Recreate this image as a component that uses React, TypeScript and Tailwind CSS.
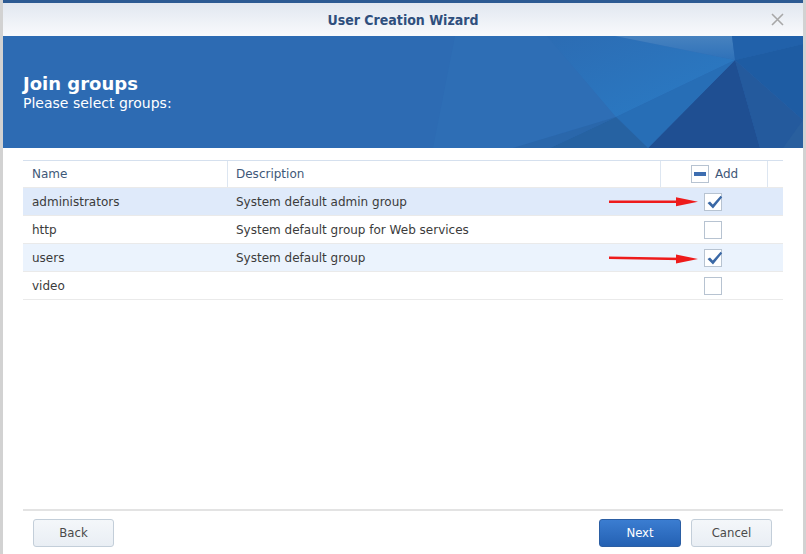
import React from "react";

const rows = [
  { name: "administrators", desc: "System default admin group", checked: true, bg: "bg-[#dfeafa]", arrow: true },
  { name: "http", desc: "System default group for Web services", checked: false, bg: "bg-white", arrow: false },
  { name: "users", desc: "System default group", checked: true, bg: "bg-[#ebf3fd]", arrow: true },
  { name: "video", desc: "", checked: false, bg: "bg-white", arrow: false },
];

function Check() {
  return (
    <svg width="20" height="20" viewBox="0 0 20 20" className="absolute left-[-1px] top-[-2px]">
      <path d="M3.5 11 L6 9.6 L8.8 12.6 L16.6 3.8 L18.2 5.2 L9 16.6 Z" fill="#3a68a6" />
    </svg>
  );
}

function Checkbox({ checked }: { checked: boolean }) {
  return (
    <div className="relative w-[18px] h-[18px] border border-[#b7c3d1] bg-white">
      {checked && <Check />}
    </div>
  );
}

function Arrow({ y2 }: { y2: number }) {
  return (
    <svg width="92" height="14" viewBox="0 0 92 14" className="absolute left-[-96px] top-[2px]">
      <path d={`M1 5.6 L74 ${y2 - 1.3} L74 ${y2 + 1.3} L1 8 Z`} fill="#ee1b1b" />
      <path d={`M68 ${y2 - 4.5} L90 ${y2} L68 ${y2 + 4.5} Z`} fill="#ee1b1b" />
    </svg>
  );
}

function Banner() {
  return (
    <div className="relative h-[112px] bg-[#2d6bb3] overflow-hidden">
      <svg className="absolute inset-0" width="800" height="112" viewBox="0 0 800 112">
        <defs>
          <linearGradient id="lt" x1="0" y1="0" x2="0" y2="1">
            <stop offset="0" stopColor="#4782bf" />
            <stop offset="1" stopColor="#2e71b9" />
          </linearGradient>
          <linearGradient id="br" x1="0" y1="0" x2="1" y2="1">
            <stop offset="0" stopColor="#2c6cb3" />
            <stop offset="1" stopColor="#2a7cc6" />
          </linearGradient>
        </defs>
        <polygon points="452,0 544,0 613,81 510,112 430,112" fill="#2e6eb5" />
        <polygon points="544,0 612,0 732,24 613,81" fill="url(#br)" />
        <polygon points="612,0 729,0 732,24" fill="url(#lt)" />
        <polygon points="729,0 800,0 800,8 732,24" fill="#2161aa" />
        <polygon points="732,24 800,8 800,84" fill="#1e5ca3" />
        <polygon points="732,24 800,84 800,112 757,112" fill="#245a9d" />
        <polygon points="732,24 757,112 645,112" fill="#1f4f92" />
        <polygon points="613,81 732,24 645,112" fill="#276eb6" />
        <polygon points="613,81 645,112 547,112" fill="#2662a2" />
        <polygon points="510,112 547,112 613,81" fill="#2a67ab" />
        <polygon points="800,84 800,112 780,112" fill="#295f9e" />
      </svg>
      <div className="relative pl-[20px] pt-[38px] text-white" style={{ fontFamily: "'DejaVu Sans', Verdana, sans-serif" }}>
        <div className="text-[18px] font-bold leading-[20px]">Join groups</div>
        <div className="text-[14px] leading-[16px] mt-[1px]">Please select groups:</div>
      </div>
    </div>
  );
}

export default function App() {
  const sans = { fontFamily: "'DejaVu Sans', Verdana, sans-serif" };
  const cond = { fontFamily: "'DejaVu Sans Condensed', 'DejaVu Sans', sans-serif", fontStretch: "condensed" as const };
  return (
    <div className="w-[806px] h-[554px] flex bg-[#d6d6d6] overflow-hidden">
      <div className="w-[3px] bg-[#d2d2d2]" />
      <div className="w-[800px] flex flex-col bg-white">
        <div className="h-[3px] bg-[#2c5a93]" />
        <div className="h-[33px] relative flex items-center justify-center bg-gradient-to-b from-[#e1e7f0] to-[#f9fafc]">
          <span className="text-[14px] font-bold text-[#2f4f7d] mt-[1px]" style={cond}>User Creation Wizard</span>
          <svg className="absolute right-[19px] top-[10px]" width="13" height="13" viewBox="0 0 13 13">
            <path d="M1 1 L12 12 M12 1 L1 12" stroke="#a8a8a8" strokeWidth="1.6" />
          </svg>
        </div>
        <Banner />
        <div className="flex-1 flex flex-col px-[20px] pt-[12px]" style={sans}>
          <div className="flex-1 flex flex-col border-b-2 border-[#e3e3e3]">
            <div className="flex h-[27px] border-t border-[#d5e0ee] text-[12px] text-[#3e5878]">
              <div className="w-[205px] flex items-center pl-[9px] border-r border-[#dde6f1]">Name</div>
              <div className="w-[433px] flex items-center pl-[8px] border-r border-[#dde6f1]">Description</div>
              <div className="w-[107px] flex items-center pl-[30px] gap-[6px] border-r border-[#dde6f1]">
                <div className="w-[18px] h-[18px] border border-[#b7c3d1] bg-white flex items-center justify-center">
                  <div className="w-[12px] h-[4px] bg-[#3d6db0]" />
                </div>
                <span>Add</span>
              </div>
              <div className="flex-1" />
            </div>
            {rows.map((r) => (
              <div key={r.name} className={`flex h-[28px] border-t border-[#eaeaea] text-[12px] text-[#3b3b3b] ${r.bg}`}>
                <div className="w-[204px] flex items-center pl-[9px]">{r.name}</div>
                <div className="w-[433px] flex items-center pl-[9px]">{r.desc}</div>
                <div className="w-[107px] flex items-center pl-[44px]">
                  <div className="relative">
                    {r.arrow && <Arrow y2={r.name === "users" ? 8 : 6.8} />}
                    <Checkbox checked={r.checked} />
                  </div>
                </div>
              </div>
            ))}
            <div className="border-t border-[#eaeaea]" />
          </div>
          <div className="h-[43px] flex items-start pt-[8px] pl-[10px] pr-[11px]" style={cond}>
            <button className="w-[81px] h-[28px] rounded-[3px] border border-[#c3ced9] bg-gradient-to-b from-[#f4f7fa] to-[#e9eef4] text-[13px] text-[#4a4a4a]">Back</button>
            <div className="flex-1" />
            <button className="w-[82px] h-[28px] rounded-[3px] border border-[#2b5ea3] bg-gradient-to-b from-[#3b7dd1] to-[#2461b3] text-[13px] text-white">Next</button>
            <button className="ml-[10px] w-[81px] h-[28px] rounded-[3px] border border-[#c3ced9] bg-gradient-to-b from-[#f4f7fa] to-[#e9eef4] text-[13px] text-[#4a4a4a]">Cancel</button>
          </div>
        </div>
      </div>
      <div className="w-[3px] bg-[#d2d2d2]" />
    </div>
  );
}
